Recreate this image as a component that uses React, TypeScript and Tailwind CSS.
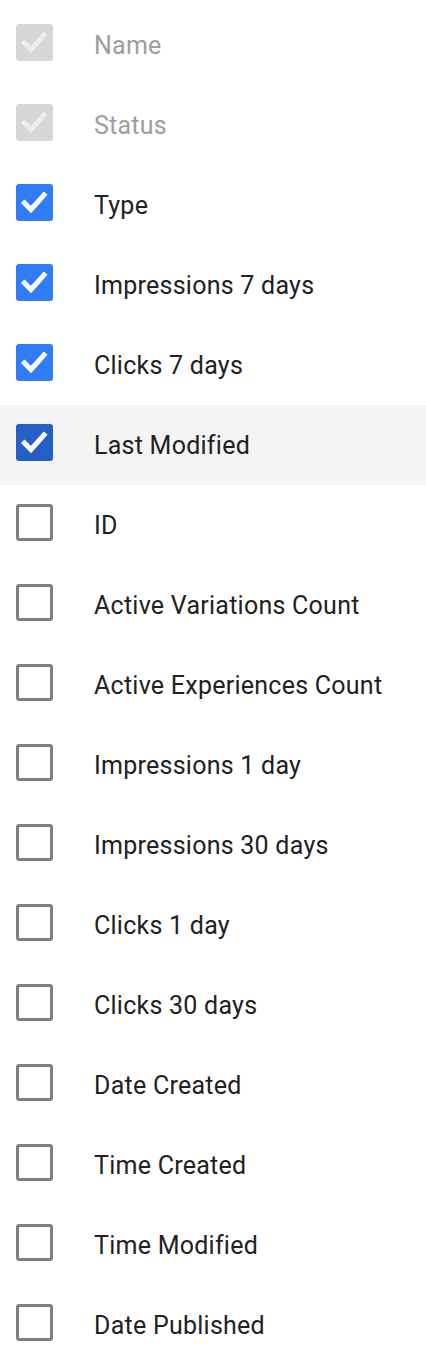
import React from "react";

type Column = {
  label: string;
  checked: boolean;
  disabled?: boolean;
  active?: boolean;
};

const columns: Column[] = [
  { label: "Name", checked: true, disabled: true },
  { label: "Status", checked: true, disabled: true },
  { label: "Type", checked: true },
  { label: "Impressions 7 days", checked: true },
  { label: "Clicks 7 days", checked: true },
  { label: "Last Modified", checked: true, active: true },
  { label: "ID", checked: false },
  { label: "Active Variations Count", checked: false },
  { label: "Active Experiences Count", checked: false },
  { label: "Impressions 1 day", checked: false },
  { label: "Impressions 30 days", checked: false },
  { label: "Clicks 1 day", checked: false },
  { label: "Clicks 30 days", checked: false },
  { label: "Date Created", checked: false },
  { label: "Time Created", checked: false },
  { label: "Time Modified", checked: false },
  { label: "Date Published", checked: false },
];

const Box = ({ checked, disabled, active }: Column) => {
  if (!checked)
    return (
      <div className="w-[37px] h-[37px] shrink-0 rounded-[3px] border-[3px] border-[#808080] bg-white -mt-[5px]" />
    );
  const bg = disabled ? "bg-[#d6d6d6]" : active ? "bg-[#235fc6]" : "bg-[#2f7cf6]";
  return (
    <div className={`w-[37px] h-[37px] shrink-0 rounded-[3px] flex items-center justify-center -mt-[5px] ${bg}`}>
      {/* check mark */}
      <svg width="37" height="37" viewBox="0 0 37 37">
        <polyline
          points="8.5,19 15,25.5 28,11"
          fill="none"
          stroke={disabled ? "#eeeeee" : "#ffffff"}
          strokeWidth="5"
          strokeLinecap="square"
        />
      </svg>
    </div>
  );
};

export default function App() {
  return (
    <div className="w-[426px] bg-white pt-[5px] font-['Roboto',sans-serif]">
      {columns.map((c) => (
        <div
          key={c.label}
          className={`h-[80px] flex items-center pl-[16px] gap-[41px] ${c.active ? "bg-[#f4f4f4]" : ""}`}
        >
          <Box {...c} />
          <span
            className={`text-[25px] leading-none tracking-[0.25px] ${c.disabled ? "text-[#9e9e9e]" : "text-[#212121]"}`}
          >
            {c.label}
          </span>
        </div>
      ))}
    </div>
  );
}
